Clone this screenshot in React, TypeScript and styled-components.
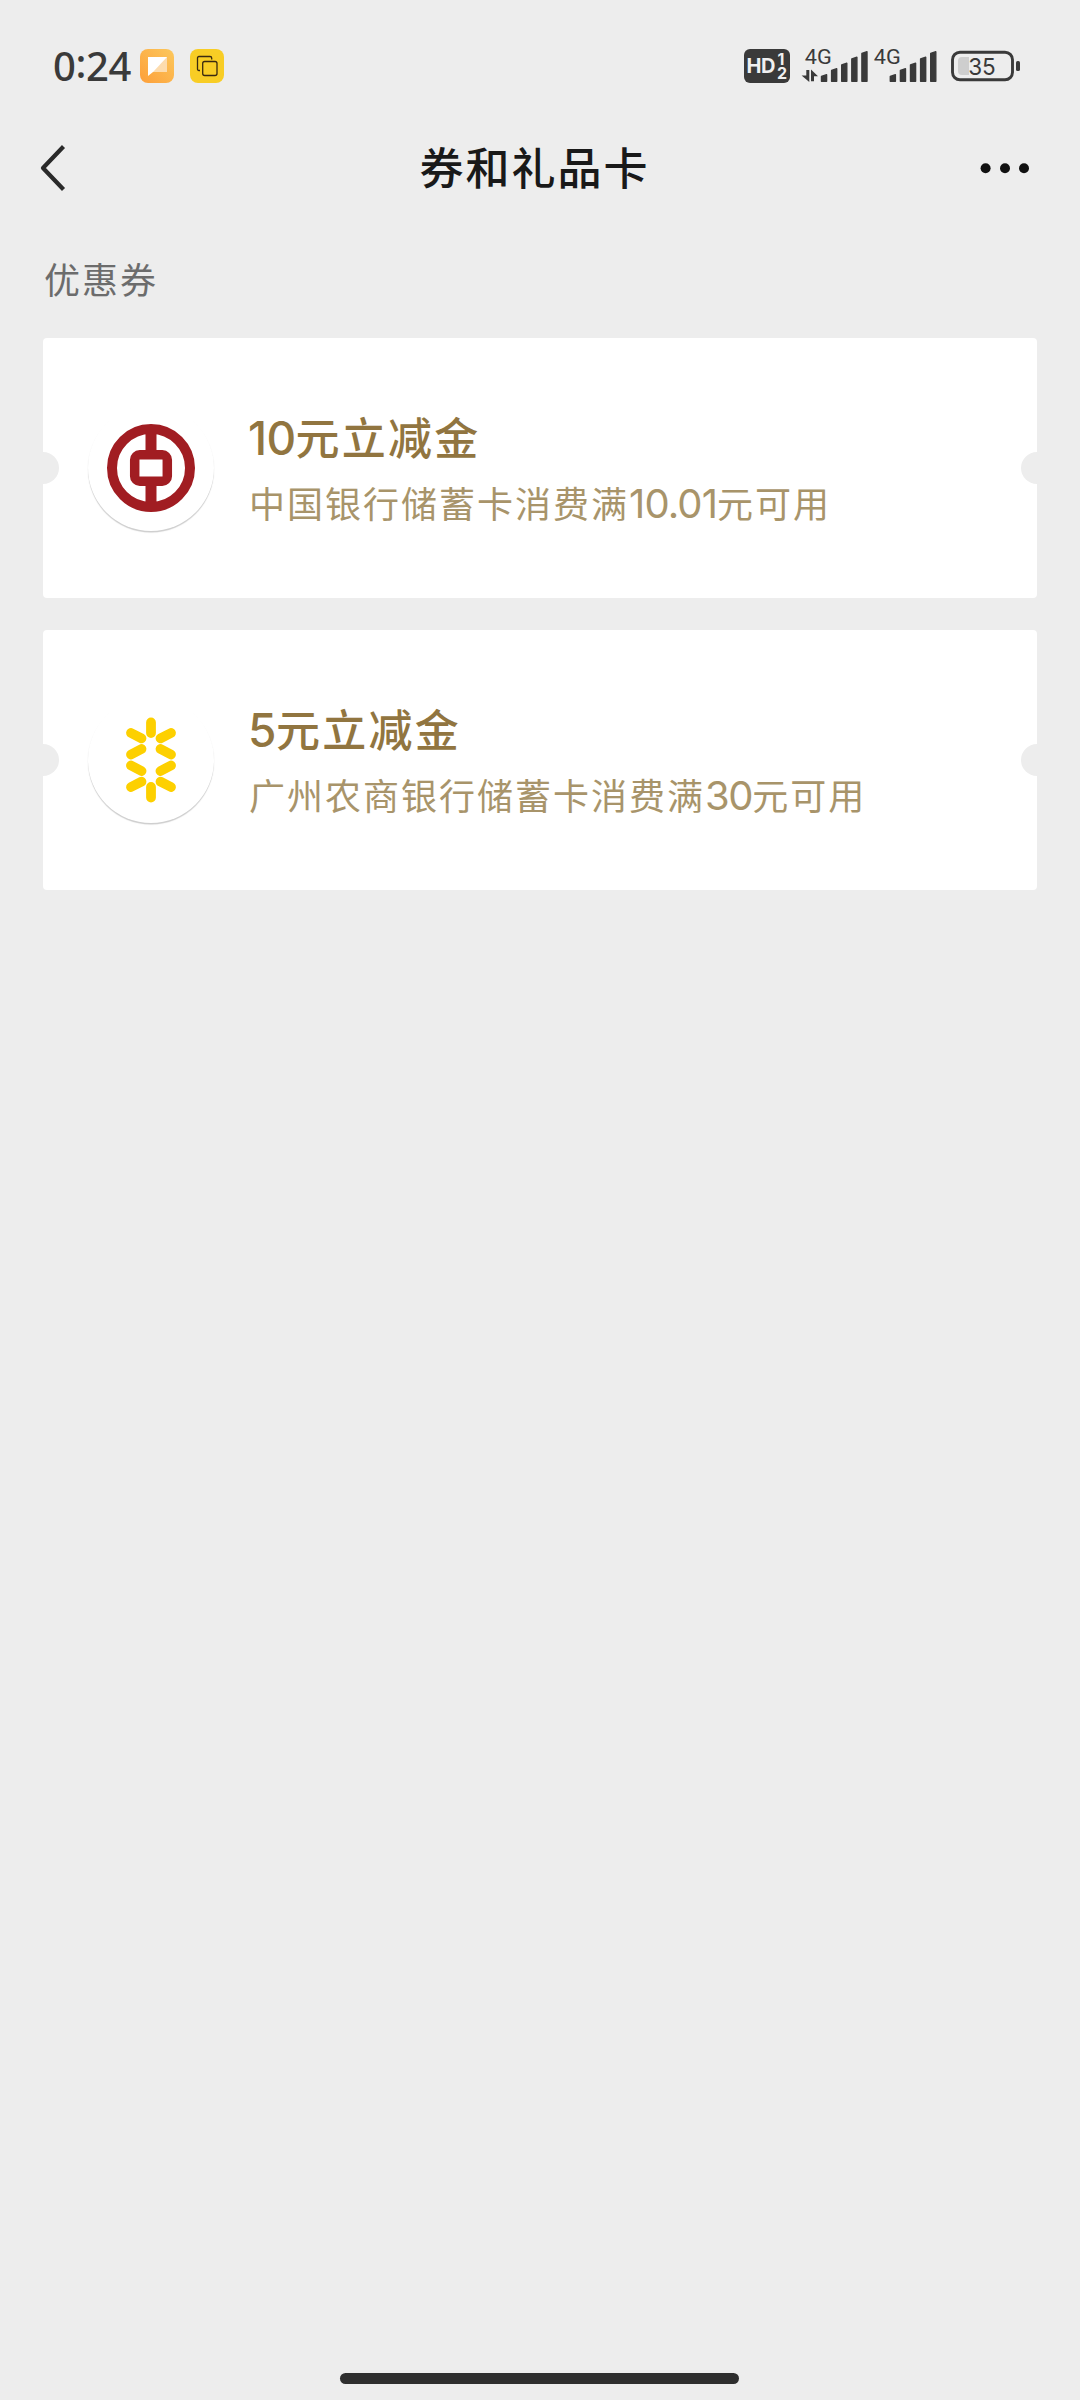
import React from "react";
import styled, { createGlobalStyle } from "styled-components";

const GlobalStyle = createGlobalStyle`
  * { box-sizing: border-box; }
  html, body { margin: 0; padding: 0; background: #ededed; }
  body { font-family: "Noto Sans CJK SC", sans-serif; }
  svg { display: block; }
`;

const Screen = styled.div`
  width: 1080px;
  height: 2400px;
  display: flex;
  flex-direction: column;
  background: #ededed;
  overflow: hidden;
`;

const StatusBar = styled.header`
  height: 120px;
  padding: 12px 60px 0 53px;
  display: flex;
  align-items: center;
  justify-content: space-between;
`;

const StatusGroup = styled.div`
  display: flex;
  align-items: center;
`;

const Clock = styled.span`
  width: 87px;
  font: 500 40px/48px "Noto Sans", sans-serif;
  letter-spacing: -0.4px;
  color: #3a3a3a;
  white-space: nowrap;
`;

const Colon = styled.span`
  position: relative;
  top: -3px;
`;

const AppBadge = styled.svg`
  margin-right: 16px;
`;

const NavBar = styled.nav`
  height: 96px;
  padding: 0 50px 0 40px;
  display: grid;
  grid-template-columns: 90px 1fr 90px;
  align-items: center;
`;

const NavTitle = styled.h1`
  margin: 0;
  padding: 0 1px 4px 0;
  text-align: center;
  font-size: 44px;
  line-height: 64px;
  font-weight: 500;
  letter-spacing: 2px;
  color: #191919;
`;

const IconButton = styled.button<{ $end?: boolean }>`
  padding: 0;
  border: 0;
  background: none;
  justify-self: ${(p) => (p.$end ? "end" : "start")};
`;

const Section = styled.main`
  flex: 1;
  padding: 0 43px;
`;

const SectionLabel = styled.h2`
  margin: 0;
  height: 122px;
  padding: 36px 0 0 1px;
  font-size: 36px;
  line-height: 52px;
  font-weight: 400;
  letter-spacing: 2px;
  color: #6c6c6c;
`;

const CouponList = styled.div`
  display: flex;
  flex-direction: column;
  gap: 32px;
`;

const Coupon = styled.article`
  position: relative;
  height: 260px;
  padding-left: 45px;
  display: flex;
  align-items: center;
  background: #fff;
  border-radius: 4px;
  overflow: hidden;

  &::before,
  &::after {
    content: "";
    position: absolute;
    top: 114px;
    width: 32px;
    height: 32px;
    border-radius: 50%;
    background: #ededed;
  }
  &::before { left: -16px; }
  &::after { right: -16px; }
`;

const LogoDisc = styled.div`
  width: 126px;
  height: 126px;
  border-radius: 50%;
  display: flex;
  align-items: center;
  justify-content: center;
  background: #fff;
  box-shadow: 0 1.5px 1px rgba(0, 0, 0, 0.2);
`;

const CouponText = styled.div`
  margin-left: 35px;
  padding-top: 2px;
`;

const CouponTitle = styled.div`
  height: 66px;
  margin-left: -1px;
  font-size: 44px;
  line-height: 66px;
  font-weight: 500;
  letter-spacing: 2.2px;
  color: #917540;
  white-space: nowrap;
`;

const CouponDesc = styled.div`
  height: 66px;
  font-size: 36px;
  line-height: 67px;
  letter-spacing: 2px;
  color: #a8946a;
  white-space: nowrap;
`;

const Digits = styled.span<{ $size: number; $gap: number }>`
  font-family: Inter, sans-serif;
  font-size: ${(p) => p.$size}px;
  letter-spacing: ${(p) => p.$gap}px;
  line-height: 1;
`;

const HomeArea = styled.footer`
  height: 38px;
  display: flex;
  justify-content: center;
  padding: 11px 1px 0 0;
`;

const HomeBar = styled.div`
  width: 399px;
  height: 11px;
  border-radius: 6px;
  background: #2e2e2e;
`;

const SignalBars = ({ x }: { x: number }) => (
  <g fill="#3a3a3a" stroke="#3a3a3a" strokeWidth="1.4" strokeLinejoin="round">
    {[76.5, 70.5, 65, 59, 53.5].map((top, i) => {
      const l = x + i * 10.1 + 0.5;
      return <path key={i} d={`M${l} 81.2V${top}L${l + 5.1} ${top - 1.8}V81.2Z`} />;
    })}
  </g>
);

const StatusIcons = () => (
  <svg width="276" height="40" viewBox="744 46 276 40" fontFamily="Roboto, sans-serif">
    <rect x="744" y="49" width="46" height="34" rx="6" fill="#3a3a3a" />
    <text fill="#f0f0f0" fontFamily="Inter, sans-serif" fontWeight="700" fontSize="20" letterSpacing="-0.6">
      <tspan x="746.6" y="73.3">HD</tspan>
      <tspan x="777.5" y="65" fontSize="16">1</tspan>
      <tspan x="777" y="79" fontSize="16">2</tspan>
    </text>
    <g fill="#3a3a3a" fontSize="20.5">
      <text x="804.8" y="64" textLength="27" lengthAdjust="spacingAndGlyphs">4G</text>
      <text x="873.8" y="64" textLength="27" lengthAdjust="spacingAndGlyphs">4G</text>
    </g>
    <path d="M806.3 70H809.3V82L801.6 75.4H806.3ZM814 81.2H811V69.5L818 76.3H814Z" fill="#3a3a3a" />
    <SignalBars x={821} />
    <SignalBars x={889.8} />
    <rect x="952.5" y="52.2" width="60" height="27.6" rx="7.5" fill="none" stroke="#3a3a3a" strokeWidth="2.9" />
    <path d="M969 57V75H962Q958 75 958 71V61Q958 57 962 57Z" fill="#cecece" />
    <text x="968.2" y="75" fontFamily="Inter, sans-serif" fontSize="23.5" fill="#3a3a3a" textLength="27.6" lengthAdjust="spacingAndGlyphs">35</text>
    <rect x="1016" y="61" width="4" height="10" rx="1.6" fill="#3a3a3a" />
  </svg>
);

const BankOfChinaLogo = () => (
  <svg width="90" height="90" viewBox="-45 -45 90 90">
    <g fill="none" stroke="#a11d22">
      <circle r="39" strokeWidth="10" />
      <rect x="-16.3" y="-13.2" width="32.6" height="26.4" rx="5" strokeWidth="9.5" />
      <path d="M0-36V-15M0 15V36" strokeWidth="11" />
    </g>
  </svg>
);

const RuralBankLogo = () => (
  <svg width="60" height="90" viewBox="-30 -45 60 90">
    <g stroke="#fdd000" strokeWidth="9.8" strokeLinecap="round">
      <path d="M0-37.5V-27M0 27V37.5" />
      <path d="M-20-27L-9.5-21.7M20-27L9.5-21.7" />
      <path d="M-20-5.5L-9.5-11M20-5.5L9.5-11" />
      <path d="M-20 5.5L-9.5 11M20 5.5L9.5 11" />
      <path d="M-20 27L-9.5 21.7M20 27L9.5 21.7" />
    </g>
  </svg>
);

export default function App() {
  return (
    <>
      <GlobalStyle />
      <Screen>
        <StatusBar>
          <StatusGroup>
            <Clock>0<Colon>:</Colon>24</Clock>
            <AppBadge width="34" height="34" viewBox="0 0 34 34">
              <defs>
                <linearGradient id="warm" x1="1" y1="0" x2="0" y2="1">
                  <stop offset="0" stopColor="#fcc85c" />
                  <stop offset="1" stopColor="#fd9f3a" />
                </linearGradient>
              </defs>
              <rect width="34" height="34" rx="8" fill="url(#warm)" />
              <path d="M8 8H27V23H13L8 27Z" fill="#fff" />
              <path d="M27 8V23H13Z" fill="#fddcae" />
            </AppBadge>
            <AppBadge width="34" height="34" viewBox="0 0 34 34">
              <rect width="34" height="34" rx="8" fill="#f8cd25" />
              <g fill="none" stroke="#3a2a10" strokeWidth="1.3">
                <path d="M10 21.5H9Q7.5 21.5 7.5 20V9Q7.5 7.5 9 7.5H20Q21.7 7.5 21.7 9V10.5" />
                <rect x="12.7" y="12.5" width="14.3" height="14" rx="2" />
              </g>
            </AppBadge>
          </StatusGroup>
          <StatusIcons />
        </StatusBar>

        <NavBar>
          <IconButton aria-label="返回">
            <svg width="28" height="50" viewBox="40 143 28 50">
              <path d="M63.5 146.5L43 168L63.5 189.5" fill="none" stroke="#2a2a2a" strokeWidth="4.2" strokeLinejoin="round" />
            </svg>
          </IconButton>
          <NavTitle>券和礼品卡</NavTitle>
          <IconButton $end aria-label="更多">
            <svg width="50" height="12" viewBox="980 162 50 12" fill="#111">
              <circle cx="985.6" cy="168.2" r="5" />
              <circle cx="1005" cy="168.2" r="5" />
              <circle cx="1024" cy="168.2" r="5" />
            </svg>
          </IconButton>
        </NavBar>

        <Section>
          <SectionLabel>优惠券</SectionLabel>
          <CouponList>
            <Coupon>
              <LogoDisc><BankOfChinaLogo /></LogoDisc>
              <CouponText>
                <CouponTitle><Digits $size={46} $gap={-0.6}>10</Digits>元立减金</CouponTitle>
                <CouponDesc>中国银行储蓄卡消费满<Digits $size={40} $gap={-0.9}>10.01</Digits>元可用</CouponDesc>
              </CouponText>
            </Coupon>
            <Coupon>
              <LogoDisc><RuralBankLogo /></LogoDisc>
              <CouponText>
                <CouponTitle><Digits $size={46} $gap={-0.4}>5</Digits>元立减金</CouponTitle>
                <CouponDesc>广州农商银行储蓄卡消费满<Digits $size={40} $gap={-1.4}>30</Digits>元可用</CouponDesc>
              </CouponText>
            </Coupon>
          </CouponList>
        </Section>

        <HomeArea><HomeBar /></HomeArea>
      </Screen>
    </>
  );
}
